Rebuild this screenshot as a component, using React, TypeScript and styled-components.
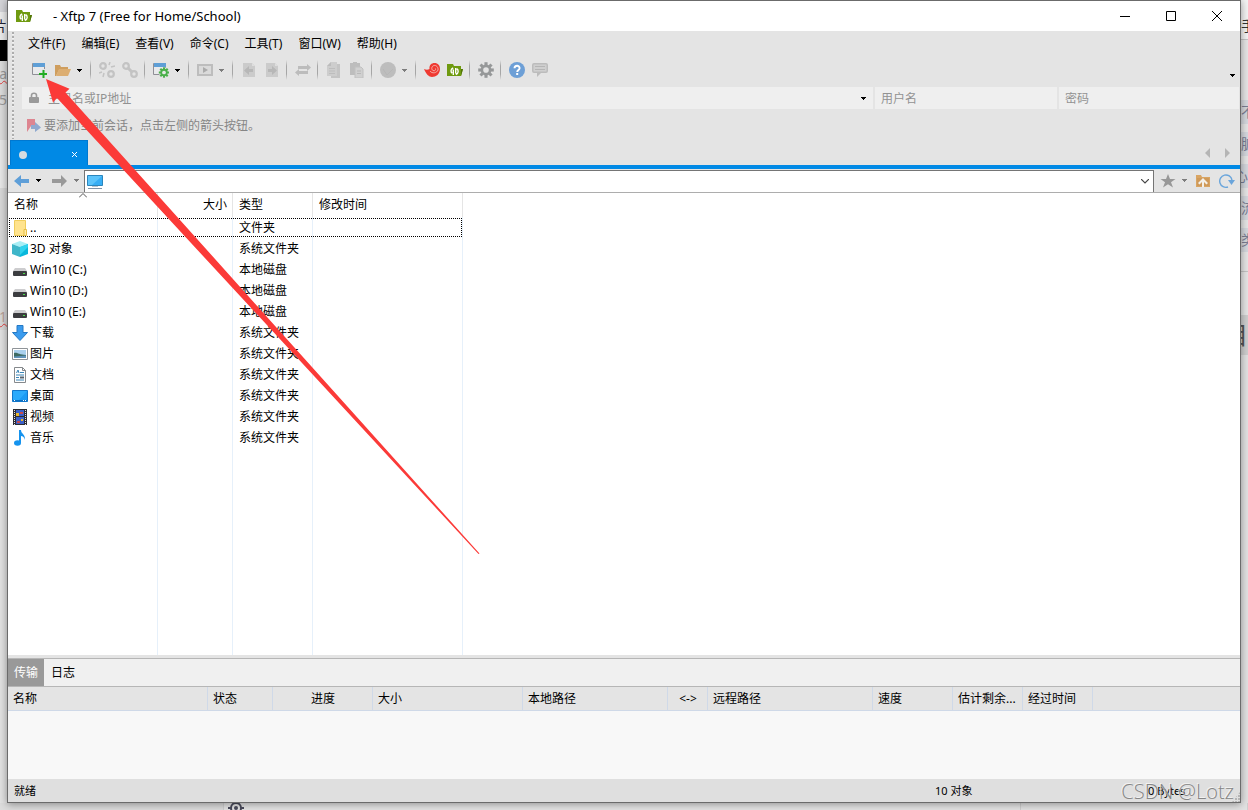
import React from "react";
import styled, { createGlobalStyle, css } from "styled-components";

const Global = createGlobalStyle`
  * { box-sizing: border-box; }
  body { margin: 0; background: #e2e2e2; }
  body, button, input, table {
    font-family: "Noto Sans", "Noto Sans CJK SC", sans-serif;
    font-size: 12px;
    line-height: 20px;
    color: #000;
  }
  button { border: 0; padding: 0; margin: 0; background: none; }
  svg { display: block; flex: none; }
`;

const CHROME = "#e4e4e4";
const BLUE = "#0089e5";

/* ---------- desktop behind the window ---------- */

const Desktop = styled.div`
  position: relative;
  display: grid;
  grid-template-columns: 7px minmax(0, 1fr) 7px;
  grid-template-rows: minmax(0, 1fr) 7px;
  min-height: 100vh;
  overflow: hidden;
`;

const Strip = styled.div`
  display: flex;
  flex-direction: column;
  overflow: hidden;
`;

const Patch = styled.div<{ $h: number; $bg: string; $color?: string; $size?: number; $end?: boolean; $line?: boolean }>`
  display: flex;
  flex: none;
  align-items: center;
  justify-content: ${(p) => (p.$end ? "flex-end" : "flex-start")};
  height: ${(p) => p.$h}px;
  background: ${(p) => p.$bg};
  color: ${(p) => p.$color || "#666"};
  font-size: ${(p) => p.$size || 14}px;
  white-space: nowrap;
  ${(p) => p.$line && css`border-bottom: 1px solid #c4c4c4;`}
`;

const Squiggle = styled.span`
  text-decoration: underline wavy #e04040 1px;
`;

const Below = styled.div`
  display: flex;
  grid-column: 1 / -1;
  background: #e0e0e0;
  overflow: hidden;
`;

const BelowPart = styled.div<{ $w?: number; $bg: string }>`
  flex: ${(p) => (p.$w ? `0 0 ${p.$w}px` : "1")};
  background: ${(p) => p.$bg};
  border-right: 1px solid #cfcfcf;
  padding-left: 4px;
`;

/* ---------- window ---------- */

const Window = styled.main`
  position: relative;
  display: flex;
  flex-direction: column;
  border: 1px solid #6b6b6b;
  background: ${CHROME};
  box-shadow: 0 1px 8px rgba(0, 0, 0, 0.4);
`;

const TitleBar = styled.header`
  display: flex;
  align-items: center;
  height: 30px;
  padding-left: 8px;
  background: #fff;
`;

const Title = styled.h1`
  flex: 1;
  margin: 0 0 0 21px;
  font-size: 13px;
  font-weight: 400;
`;

const CaptionButton = styled.button`
  display: grid;
  place-items: center;
  width: 46px;
  height: 30px;
`;

const Bars = styled.div`
  display: flex;
`;

const Grip = styled.div`
  width: 2px;
  margin: 1px 8px 1px 4px;
  background: repeating-linear-gradient(#adadad 0 2px, #f2f2f2 2px 3px, transparent 3px 4px);
`;

const BarStack = styled.div`
  flex: 1;
  min-width: 0;
`;

const MenuBar = styled.nav`
  display: flex;
  gap: 16px;
  height: 26px;
  padding-left: 6px;
  align-items: center;
`;

const ToolBar = styled.div`
  display: flex;
  align-items: center;
  height: 30px;
  padding: 0 5px 4px 6px;
`;

const Tool = styled.button`
  display: grid;
  place-items: center;
  width: 23px;
  height: 26px;
`;

const Drop = styled.button`
  display: flex;
  align-items: center;
  width: 13px;
  height: 26px;
  padding-left: 3px;
`;

const Separator = styled.span`
  width: 8px;
  height: 20px;
  background: linear-gradient(transparent, #a6a6a6 30% 70%, transparent) 3px 0 / 1px 100% no-repeat;
`;

const Spacer = styled.span`
  flex: 1;
`;

const OverflowDrop = styled.button`
  align-self: flex-end;
  padding-bottom: 6px;
`;

const HostBar = styled.form`
  display: flex;
  gap: 2px;
  height: 22px;
  margin-right: 1px;
`;

const Field = styled.label<{ $w?: number }>`
  display: flex;
  align-items: center;
  flex: ${(p) => (p.$w ? `0 1 ${p.$w}px` : "1")};
  min-width: 0;
  padding-left: 6px;
  background: #efefef;
`;

const FieldInput = styled.input<{ $gap?: boolean }>`
  flex: 1;
  min-width: 0;
  height: 22px;
  padding: 0;
  margin-left: ${(p) => (p.$gap ? 8 : 0)}px;
  border: 0;
  outline: 0;
  background: none;
  &::placeholder { color: #929292; opacity: 1; }
`;

const FieldDrop = styled.button`
  width: 12px;
  height: 22px;
`;

const SessionBar = styled.div`
  display: flex;
  align-items: center;
  gap: 3px;
  height: 31px;
  padding: 2px 0 0 5px;
  color: #868686;
`;

const TabStrip = styled.div`
  display: flex;
  height: 29px;
  padding-left: 2px;
  border-bottom: 4px solid ${BLUE};
`;

const SessionTab = styled.div`
  display: flex;
  align-items: center;
  justify-content: space-between;
  width: 78px;
  padding: 3px 10px 0 8px;
  border: solid #0078d0;
  border-width: 1px 1px 0;
  background: ${BLUE};
`;

const Dot = styled.span`
  width: 8px;
  height: 8px;
  border-radius: 50%;
  background: #d5dbe0;
`;

const TabArrows = styled.div`
  display: flex;
  align-items: center;
  gap: 15px;
  margin-left: auto;
  padding-right: 10px;
`;

const AddressBar = styled.div`
  display: flex;
  align-items: center;
  height: 24px;
  border-bottom: 1px solid #adadad;
`;

const AddressTools = styled.div<{ $left?: boolean }>`
  display: flex;
  align-items: center;
  padding-left: 6px;
  width: ${(p) => (p.$left ? 76 : 86)}px;
  gap: ${(p) => (p.$left ? 11 : 8)}px;
`;

const ToolPair = styled.div`
  display: flex;
  align-items: center;
  gap: 6px;
`;

const AddressBox = styled.label`
  display: flex;
  flex: 1;
  min-width: 0;
  height: 22px;
  margin-top: 1px;
  padding: 0 4px 0 2px;
  align-items: center;
  border: solid #757575;
  border-width: 1px 1px 0;
  background: #fff;
`;

/* ---------- file list ---------- */

const FilePane = styled.section`
  display: grid;
  flex: 1;
  min-height: 460px;
  justify-content: start;
  background: #fff;
`;

const FileTable = styled.table`
  table-layout: fixed;
  width: 455px;
  height: 100%;
  border-spacing: 0;
  th, td { padding: 0 5px 0 6px; border-right: 1px solid #e6f0fa; text-align: left; white-space: nowrap; }
  th { position: relative; height: 24px; font-weight: 400; border-color: #e5e5e5; }
  td:first-child { padding-left: 4px; }
`;

const FileRow = styled.tr<{ $focused?: boolean }>`
  height: 21px;
  ${(p) => p.$focused && css`outline: 1px dotted #000; outline-offset: -2px;`}
`;

const RightHead = styled.th`
  && { text-align: right; }
`;

const NameCell = styled.div`
  display: flex;
  align-items: center;
  gap: 2px;
`;

const SortMark = styled.span`
  position: absolute;
  top: 0;
  left: 50%;
  margin-left: -4px;
`;

/* ---------- transfer pane ---------- */

const PaneTabs = styled.div`
  display: flex;
  height: 29px;
  margin-top: 3px;
  border: solid #b6b6b6;
  border-width: 1px 0;
  background: #f0f0f0;
`;

const PaneTab = styled.button<{ $active?: boolean }>`
  width: 36px;
  height: 27px;
  ${(p) => p.$active && css`background: #999; color: #fff; margin-right: 1px;`}
`;

const TransferPane = styled.section`
  height: 92px;
  background: #f8f8f8;
  overflow: hidden;
`;

const TransferTable = styled.table`
  table-layout: fixed;
  width: 100%;
  border-spacing: 0;
  background: ${CHROME};
`;

const TransferHead = styled.th<{ $center?: boolean; $last?: boolean }>`
  height: 24px;
  padding: 0 4px 0 5px;
  border: solid #cfd9e8;
  border-width: 0 ${(p) => (p.$last ? 0 : 1)}px 1px 0;
  font-weight: 400;
  text-align: ${(p) => (p.$center ? "center" : "left")};
  white-space: nowrap;
`;

const StatusBar = styled.footer`
  display: flex;
  align-items: center;
  height: 23px;
  padding-left: 6px;
  background: #dfdfdf;
  font-size: 11px;
`;

const StatusItem = styled.span<{ $w?: number }>`
  flex: ${(p) => (p.$w ? `0 0 ${p.$w}px` : "1")};
`;

const SizeGrip = styled.span`
  align-self: flex-end;
  width: 8px;
  height: 10px;
  background: radial-gradient(circle at 1px 1px, #b5b5b5 1px, transparent 1px) 0 0 / 3px 3px;
  clip-path: polygon(100% 0, 100% 100%, 0 100%);
`;

const Watermark = styled.div`
  position: absolute;
  right: 14px;
  bottom: 4px;
  font-family: "Open Sans", sans-serif;
  font-size: 20px;
  font-weight: 300;
  line-height: 28px;
  color: #858585;
  text-shadow: -1px -1px 0 #f2f2f2;
  pointer-events: none;
`;

const Arrow = styled.svg`
  position: absolute;
  top: 0;
  left: 0;
  pointer-events: none;
`;

/* ---------- icons ---------- */

const Svg = ({ w = 16, h = 16, children }: { w?: number; h?: number; children: React.ReactNode }) => (
  <svg width={w} height={h} viewBox={`0 0 ${w} ${h}`} aria-hidden="true">{children}</svg>
);

const Caret = ({ color = "#000" }: { color?: string }) => (
  <Svg w={5} h={3}><path d="M0 0h5v1H4v1H3v1H2V2H1V1H0z" fill={color} /></Svg>
);

const XftpIcon = () => (
  <Svg>
    <path d="M0 2h6l1 2h7v3h2l-2 7H0z" fill="#6f9a10" />
    <path d="M14 7h2l-2 7z" fill="#527608" />
    <path d="M6.200 6C3.500 7 3.500 10 5.200 11.300M6.300 13V7.500M8.700 11.500V6M8.800 12.500c3-1 3-4.500.9-5.900" fill="none" stroke="#fff" strokeWidth="1.400" />
  </Svg>
);

const WindowGlyph = () => (
  <>
    <path d="M.5 1.500h12v11H.500z" fill="#e9eaec" stroke="#8f8f96" />
    <path d="M1 1h12v4H1z" fill="#5f9fd6" />
  </>
);

const NewIcon = () => (
  <Svg>
    <WindowGlyph />
    <path d="M10 7h3v3h3v3h-3v3h-3v-3H7v-3h3z" fill="#e4e4e4" />
    <path d="M10.500 8h2v3H15v2h-2.500v3h-2v-3H7v-2h3.500z" fill="#22ac22" />
  </Svg>
);

const GearShape = ({ x, y, r, fill, hole }: { x: number; y: number; r: number; fill: string; hole: string }) => (
  <g transform={`translate(${x} ${y})`}>
    {[0, 45, 90, 135].map((a) => (
      <rect key={a} x={-r * 0.2} y={-r} width={r * 0.4} height={r * 2} fill={fill} transform={`rotate(${a})`} />
    ))}
    <circle r={r * 0.7} fill={fill} />
    <circle r={r * 0.36} fill={hole} />
  </g>
);

const NewGearIcon = () => (
  <Svg><WindowGlyph /><circle cx="11" cy="10.500" r="5" fill="#e4e4e4" /><GearShape x={11} y={10.5} r={5.2} fill="#4ab04a" hole="#e8e8e8" /></Svg>
);

const OpenIcon = () => (
  <Svg>
    <path d="M0 3h5l1 2h7v3H4l-3 6H0z" fill="#cf9e5e" />
    <path d="M4 7h12l-3 7H1z" fill="#dcae72" />
  </Svg>
);

const LinkIcon = ({ broken }: { broken?: boolean }) => (
  <Svg>
    <g fill="none" stroke="#c3c3c3" strokeWidth="2.200">
      <circle cx="4" cy="4" r="2.800" />
      <circle cx="12" cy="12" r="2.800" />
      {broken ? <path d="M10 3l1-3M12 5l4-1M5 11l-1 4M3 10l-3 1" strokeWidth="1.500" /> : <path d="M6 6l4 4" strokeWidth="3" />}
    </g>
  </Svg>
);

const PlayIcon = () => (
  <Svg><path d="M1 3h14v10H1z" fill="#dadada" stroke="#bdbdbd" strokeWidth="2" /><path d="M6 5l5 3-5 3z" fill="#ababab" /></Svg>
);

const DocArrowIcon = ({ flip }: { flip?: boolean }) => (
  <Svg>
    <path d="M2 1h9l3 3v11H2z" fill="#cbcbcb" />
    <path d="M11 1v3h3z" fill="#dedede" />
    <path d={flip ? "M4 7h4V4l5 4.500L8 13v-3H4z" : "M12 7H8V4L3 8.500 8 13v-3h4z"} fill="#b7b7b7" />
  </Svg>
);

const SwapIcon = () => (
  <Svg><path d="M3 4h9V2l4 3.500L12 9V7H3zM13 9H4V7L0 10.500 4 14v-2h9z" fill="#bcbcbc" /></Svg>
);

const CopyIcon = () => (
  <Svg>
    <path d="M5 2h9v14H5z" fill="#c4c4c4" />
    <path d="M1 4l4-4h6v14H1z" fill="#cdcdcd" />
    <path d="M1 4l4-4v4z" fill="#bcbcbc" />
    <path d="M3 6.500h6M3 9h6M3 11.500h6" stroke="#bdbdbd" />
  </Svg>
);

const PasteIcon = () => (
  <Svg>
    <path d="M1 1h3V0h4v1h3v12H1z" fill="#bdbdbd" />
    <path d="M6 5h6l2 2v9H6z" fill="#d0d0d0" stroke="#c0c0c0" />
    <path d="M8 9h4M8 11.500h4" stroke="#b8b8b8" />
  </Svg>
);

const BallIcon = () => (
  <Svg><circle cx="8" cy="8" r="8" fill="#bdbdbd" /><path d="M3 7l4 6 6-6" fill="none" stroke="#b7b7b7" /></Svg>
);

const ShellIcon = () => (
  <Svg>
    <path d="M0 7c2 1 4 1 5.500 0C5 3 7.500 1 10.500 1 14 1 16 3.500 16 7c0 5-4 8-8 8-3 0-6-3-8-8z" fill="#ef3a32" />
    <path d="M6 9c2 3 7 2 8-1 .5-3-2-5-4-4.500C7.500 4 7 7.500 9 8.500s3-1 2.500-2" fill="none" stroke="#f6b5b0" strokeWidth=".9" />
  </Svg>
);

const GearIcon = () => (
  <Svg><GearShape x={8} y={8} r={7.8} fill="#969899" hole="#e4e4e4" /></Svg>
);

const HelpIcon = () => (
  <Svg>
    <circle cx="8" cy="8" r="8" fill="#6d9fd6" />
    <path d="M5.500 6.300C5.500 3 10.800 3 10.600 6.200 10.500 8 8.200 8 8.200 10" fill="none" stroke="#fff" strokeWidth="1.900" />
    <path d="M7.200 11h2v2h-2z" fill="#fff" />
  </Svg>
);

const ChatIcon = () => (
  <Svg>
    <path d="M2 1h12q2 0 2 2v6q0 2-2 2H9l-4 4v-4H2q-2 0-2-2V3q0-2 2-2z" fill="#bcbcbc" />
    <path d="M2 2.500h12q.5 0 .5 1v5q0 1-.5 1H2q-.5 0-.5-1v-5q0-1 .5-1z" fill="#cfcfcf" />
    <path d="M3 4.500h10M3 7.500h10" stroke="#b5b5b5" />
  </Svg>
);

const LockIcon = () => (
  <Svg w={12} h={12}>
    <path d="M3.500 6V3.500C3.500 .5 8.500 .5 8.500 3.500V6" fill="none" stroke="#9a9a9a" strokeWidth="1.600" />
    <rect x="1" y="5" width="10" height="6" rx="1" fill="#9a9a9a" />
  </Svg>
);

const FlagIcon = () => (
  <Svg w={14} h={14}>
    <path d="M0 0h8v8l-4-1-4 6z" fill="#dd8590" />
    <path d="M4 6h4V3l6 5.500L8 13v-3H4z" fill="#8fa9cf" />
  </Svg>
);

const CloseTab = () => (
  <Svg w={5} h={5}><path d="M0 0l5 5M5 0L0 5" stroke="#fff" /></Svg>
);

const Triangle = ({ right }: { right?: boolean }) => (
  <Svg w={5} h={10}><path d={right ? "M0 0l5 5-5 5z" : "M5 0L0 5l5 5z"} fill="#b5b5b5" /></Svg>
);

const NavArrow = ({ right, fill }: { right?: boolean; fill: string }) => (
  <Svg w={16} h={12}>
    <path d={right ? "M0 4h9V0l6 6-6 6V8H0z" : "M15 4H7V0L0 6l7 6V8h8z"} fill={fill} />
  </Svg>
);

const ComputerIcon = () => (
  <Svg>
    <path d="M.500 1.500h15v10H.500z" fill="#37aef5" stroke="#2b86bd" />
    <path d="M1 2h14L5 11H1z" fill="#5cc4fb" />
    <path d="M5 12h6v1H5z" fill="#b8c4ce" />
    <path d="M1 14h14v1H1z" fill="#7f93a8" />
  </Svg>
);

const StarIcon = () => (
  <Svg><path d="M8 1l2 5h5.500l-4.500 3.300 2 5.200-5-3.200-5 3.200 2-5.200L.5 6H6z" fill="#989898" /></Svg>
);

const UpFolderIcon = () => (
  <Svg>
    <path d="M1 2h5l1 2h8v10H1z" fill="#d9a563" />
    <path d="M2 5h12v8H2z" fill="#cf9a5a" />
    <path d="M8 5l5 5-1.500 1.500L9 9v5H7V9l-2.500 2.500L3 10z" fill="#f4f0e8" />
  </Svg>
);

const RefreshIcon = () => (
  <Svg>
    <path d="M9 14A6.200 6.200 0 1 1 13 7" fill="none" stroke="#6aa5db" strokeWidth="1.400" />
    <path d="M9 7h7l-3.500 5z" fill="#6aa5db" />
  </Svg>
);

const FolderIcon = () => (
  <Svg><path d="M2.500 0.500h11v15h-11z" fill="#ffe38d" stroke="#f0cd5c" /><path d="M12 9.500h2.500v6H12z" fill="#ffeaa6" stroke="#e6be45" /></Svg>
);

const CubeIcon = () => (
  <Svg>
    <path d="M8 0l8 3-8 3-8-3z" fill="#a9eef5" />
    <path d="M0 3l8 3v10l-8-3z" fill="#3fb6c9" />
    <path d="M8 6l8-3v10l-8 3z" fill="#08b8dc" />
    <path d="M8 6l8-3v3l-8 8z" fill="#30d3ee" />
  </Svg>
);

const DriveIcon = () => (
  <Svg>
    <path d="M3 6h10l2 3H1z" fill="#cdcdcf" />
    <rect x="1" y="9" width="14" height="5" rx="1" fill="#3c3d40" />
    <path d="M11 11h2v1h-2z" fill="#4be04b" />
  </Svg>
);

const DownloadIcon = () => (
  <Svg><path d="M5 .5h6v7h4.500L8 15.500 .5 7.500H5z" fill="#3a9bee" stroke="#2579c4" /></Svg>
);

const PictureIcon = () => (
  <Svg>
    <path d="M.5 2.500h15v11H.500z" fill="#fff" stroke="#8f9498" />
    <path d="M2 4h12v8H2z" fill="#a9d0ee" />
    <path d="M2 7c3-1 5 2 12 2v3H2z" fill="#3d6b63" />
    <path d="M2 10.500l12-1V12H2z" fill="#5f93bb" />
  </Svg>
);

const DocumentIcon = () => (
  <Svg>
    <path d="M2.500.5h8l3 3v12h-11z" fill="#fff" stroke="#85898c" />
    <path d="M10.500.5v3h3" fill="none" stroke="#85898c" />
    <path d="M4.500 6L6 3l1 3M8 5.500h4M4 8h8M4 13h8" fill="none" stroke="#3b86b8" />
    <path d="M4 10.500h3" stroke="#3b86b8" />
    <path d="M8 9.500h4v2H8z" fill="#55616c" />
  </Svg>
);

const DesktopIcon = () => (
  <Svg>
    <path d="M.5 2.500h15v11H.500z" fill="#1b9bf5" stroke="#1177cc" />
    <path d="M1 3h14L7 12H1z" fill="#2aaafc" />
    <path d="M1 12h14v1H1z" fill="#0c6fc0" />
    <path d="M2 12h1v1H2zM11 12h1v1h-1zM13 12h1v1h-1z" fill="#fff" />
  </Svg>
);

const VideoIcon = () => (
  <Svg>
    <path d="M1 0h14v16H1z" fill="#2d2d33" />
    <path d="M2.500 1v15M13.500 1v15" stroke="#e4e4e4" strokeDasharray="1 1" />
    <path d="M4 1h8v6H4zM4 8h8v7H4z" fill="#3a60c8" />
    <path d="M4 4h3v3H4zM9 10h2v2H9z" fill="#e9b72b" />
    <path d="M8 3h3v2H8zM5 12h3v2H5z" fill="#c94a4a" />
  </Svg>
);

const MusicIcon = () => (
  <Svg>
    <ellipse cx="5.500" cy="13" rx="3.500" ry="2.800" fill="#1593ee" />
    <path d="M7 0h2c0 4 4.500 4 4 10-1-3-2-4-4-4v7H7z" fill="#1593ee" />
  </Svg>
);

/* ---------- data ---------- */

const menus = ["文件(F)", "编辑(E)", "查看(V)", "命令(C)", "工具(T)", "窗口(W)", "帮助(H)"];

type ToolItem = { label: string; icon: React.ReactNode; drop?: string };

const toolGroups: ToolItem[][] = [
  [{ label: "新建", icon: <NewIcon /> }, { label: "打开", icon: <OpenIcon />, drop: "#000" }],
  [{ label: "断开", icon: <LinkIcon broken /> }, { label: "重新连接", icon: <LinkIcon /> }],
  [{ label: "属性", icon: <NewGearIcon />, drop: "#000" }],
  [{ label: "运行", icon: <PlayIcon />, drop: "#7d7d7d" }],
  [{ label: "下载", icon: <DocArrowIcon /> }, { label: "上传", icon: <DocArrowIcon flip /> }],
  [{ label: "同步", icon: <SwapIcon /> }],
  [{ label: "复制", icon: <CopyIcon /> }, { label: "粘贴", icon: <PasteIcon /> }],
  [{ label: "编码", icon: <BallIcon />, drop: "#7d7d7d" }],
  [{ label: "Xshell", icon: <ShellIcon /> }, { label: "Xftp", icon: <XftpIcon /> }],
  [{ label: "选项", icon: <GearIcon /> }],
  [{ label: "帮助", icon: <HelpIcon /> }, { label: "反馈", icon: <ChatIcon /> }],
];

const files = [
  { name: "..", type: "文件夹", icon: <FolderIcon /> },
  { name: "3D 对象", type: "系统文件夹", icon: <CubeIcon /> },
  { name: "Win10 (C:)", type: "本地磁盘", icon: <DriveIcon /> },
  { name: "Win10 (D:)", type: "本地磁盘", icon: <DriveIcon /> },
  { name: "Win10 (E:)", type: "本地磁盘", icon: <DriveIcon /> },
  { name: "下载", type: "系统文件夹", icon: <DownloadIcon /> },
  { name: "图片", type: "系统文件夹", icon: <PictureIcon /> },
  { name: "文档", type: "系统文件夹", icon: <DocumentIcon /> },
  { name: "桌面", type: "系统文件夹", icon: <DesktopIcon /> },
  { name: "视频", type: "系统文件夹", icon: <VideoIcon /> },
  { name: "音乐", type: "系统文件夹", icon: <MusicIcon /> },
];

const transferColumns = [
  { label: "名称", w: 200 },
  { label: "状态", w: 65 },
  { label: "进度", w: 100, center: true },
  { label: "大小", w: 150 },
  { label: "本地路径", w: 145 },
  { label: "<->", w: 40, center: true },
  { label: "远程路径", w: 165 },
  { label: "速度", w: 80 },
  { label: "估计剩余...", w: 70 },
  { label: "经过时间", w: 70 },
];

export default function App() {
  return (
    <Desktop>
      <Global />
      <Strip>
        <Patch $h={12} $bg="#d4d4d8" />
        <Patch $h={28} $bg="#ececec" $color="#223" $end>片</Patch>
        <Patch $h={21} $bg="#000" />
        <Patch $h={26} $bg="#dcdcdc" $color="#999" $end><Squiggle>sa</Squiggle></Patch>
        <Patch $h={26} $bg="#dcdcdc" $color="#999" $end>5</Patch>
        <Patch $h={27} $bg="#dcdcdc" />
        <Patch $h={48} $bg="#e8e8e8" />
        <Patch $h={116} $bg="#d8d8d8" />
        <Patch $h={26} $bg="#d8d8d8" $color="#b9a29a" $end><Squiggle>1</Squiggle></Patch>
      </Strip>

      <Window>
        <TitleBar>
          <XftpIcon />
          <Title>- Xftp 7 (Free for Home/School)</Title>
          <CaptionButton aria-label="最小化"><Svg w={10} h={10}><path d="M0 5.500h10" stroke="#000" /></Svg></CaptionButton>
          <CaptionButton aria-label="最大化"><Svg w={10} h={10}><path d="M.5.5h9v9h-9z" fill="none" stroke="#000" /></Svg></CaptionButton>
          <CaptionButton aria-label="关闭"><Svg w={10} h={10}><path d="M0 0l10 10M10 0L0 10" stroke="#000" /></Svg></CaptionButton>
        </TitleBar>

        <Bars>
          <Grip />
          <BarStack>
            <MenuBar>{menus.map((m) => <button key={m}>{m}</button>)}</MenuBar>
            <ToolBar>
              {toolGroups.map((group, i) => (
                <React.Fragment key={i}>
                  {i > 0 && <Separator />}
                  {group.map((t) => (
                    <React.Fragment key={t.label}>
                      <Tool aria-label={t.label}>{t.icon}</Tool>
                      {t.drop && <Drop aria-label={`${t.label}选项`}><Caret color={t.drop} /></Drop>}
                    </React.Fragment>
                  ))}
                </React.Fragment>
              ))}
              <Spacer />
              <OverflowDrop aria-label="更多"><Caret /></OverflowDrop>
            </ToolBar>
            <HostBar>
              <Field>
                <LockIcon />
                <FieldInput $gap aria-label="主机名" placeholder="主机名或IP地址" />
                <FieldDrop type="button" aria-label="历史主机"><Caret /></FieldDrop>
              </Field>
              <Field $w={182}><FieldInput aria-label="用户名" placeholder="用户名" /></Field>
              <Field $w={180}><FieldInput aria-label="密码" type="password" placeholder="密码" /></Field>
            </HostBar>
          </BarStack>
        </Bars>

        <Bars>
          <Grip />
          <SessionBar><FlagIcon />要添加当前会话，点击左侧的箭头按钮。</SessionBar>
        </Bars>

        <TabStrip>
          <SessionTab>
            <Dot />
            <button aria-label="关闭标签"><CloseTab /></button>
          </SessionTab>
          <TabArrows>
            <button aria-label="上一个标签"><Triangle /></button>
            <button aria-label="下一个标签"><Triangle right /></button>
          </TabArrows>
        </TabStrip>

        <AddressBar>
          <AddressTools $left>
            <ToolPair>
              <button aria-label="后退"><NavArrow fill="#5f9fd8" /></button>
              <button aria-label="后退历史"><Caret /></button>
            </ToolPair>
            <ToolPair>
              <button aria-label="前进"><NavArrow right fill="#999" /></button>
              <button aria-label="前进历史"><Caret color="#7d7d7d" /></button>
            </ToolPair>
          </AddressTools>
          <AddressBox>
            <ComputerIcon />
            <FieldInput aria-label="路径" />
            <button aria-label="路径历史"><Svg w={8} h={5}><path d="M0 0l4 4 4-4" fill="none" stroke="#444" strokeWidth="1.200" /></Svg></button>
          </AddressBox>
          <AddressTools>
            <ToolPair>
              <button aria-label="收藏"><StarIcon /></button>
              <button aria-label="收藏列表"><Caret color="#7d7d7d" /></button>
            </ToolPair>
            <button aria-label="上级目录"><UpFolderIcon /></button>
            <button aria-label="刷新"><RefreshIcon /></button>
          </AddressTools>
        </AddressBar>

        <FilePane>
          <FileTable>
            <colgroup><col width={150} /><col width={75} /><col width={80} /><col width={150} /></colgroup>
            <thead>
              <tr>
                <th>名称<SortMark><Svg w={8} h={5}><path d="M0 4.500l4-4 4 4" fill="none" stroke="#555" /></Svg></SortMark></th>
                <RightHead>大小</RightHead>
                <th>类型</th>
                <th>修改时间</th>
              </tr>
            </thead>
            <tbody>
              {files.map((f, i) => (
                <FileRow key={f.name} $focused={i === 0}>
                  <td><NameCell>{f.icon}{f.name}</NameCell></td>
                  <td />
                  <td>{f.type}</td>
                  <td />
                </FileRow>
              ))}
              <tr><td /><td /><td /><td /></tr>
            </tbody>
          </FileTable>
        </FilePane>

        <PaneTabs role="tablist">
          <PaneTab role="tab" aria-selected $active>传输</PaneTab>
          <PaneTab role="tab" aria-selected={false}>日志</PaneTab>
        </PaneTabs>
        <TransferPane>
          <TransferTable>
            <colgroup>{transferColumns.map((c) => <col key={c.label} width={c.w} />)}<col /></colgroup>
            <thead>
              <tr>
                {transferColumns.map((c) => <TransferHead key={c.label} $center={c.center}>{c.label}</TransferHead>)}
                <TransferHead $last aria-hidden="true" />
              </tr>
            </thead>
          </TransferTable>
        </TransferPane>

        <StatusBar>
          <StatusItem>就绪</StatusItem>
          <StatusItem $w={213}>10 对象</StatusItem>
          <StatusItem $w={84}>0 Bytes</StatusItem>
          <SizeGrip />
        </StatusBar>
      </Window>

      <Strip>
        <Patch $h={12} $bg="#f4f4f4" />
        <Patch $h={28} $bg="#f4f4f4" $color="#333" $line>手</Patch>
        <Patch $h={60} $bg="#e6e6e6" />
        <Patch $h={24} $bg="#d5d8de" $color="#7a7e95">不</Patch>
        <Patch $h={8} $bg="#e6e6e6" />
        <Patch $h={24} $bg="#d5d8de" $color="#7a7e95">脏</Patch>
        <Patch $h={8} $bg="#e6e6e6" />
        <Patch $h={24} $bg="#d5d8de" $color="#7a7e95" $end>心</Patch>
        <Patch $h={8} $bg="#e6e6e6" />
        <Patch $h={24} $bg="#d5d8de" $color="#7a7e95">流</Patch>
        <Patch $h={8} $bg="#e6e6e6" />
        <Patch $h={24} $bg="#d5d8de" $color="#7a7e95">类</Patch>
        <Patch $h={20} $bg="#e6e6e6" $line />
        <Patch $h={43} $bg="#e6e6e6" />
        <Patch $h={40} $bg="#cfcfcf" $color="#555" $size={24} $end>目</Patch>
      </Strip>

      <Below>
        <BelowPart $w={224} $bg="#dcdcdc" />
        <BelowPart $w={797} $bg="#e4e4e4">
          <Svg><circle cx="8" cy="5" r="5" fill="none" stroke="#4a4b5c" strokeWidth="2" /><circle cx="8" cy="5" r="2" fill="#4a4b5c" /><path d="M0 5h3M13 5h3" stroke="#4a4b5c" strokeWidth="2" /></Svg>
        </BelowPart>
        <BelowPart $bg="#e2e2e2" />
      </Below>

      <Watermark>CSDN @Lotz</Watermark>
      <Arrow width="490" height="560" viewBox="0 0 490 560" aria-hidden="true">
        <path d="M46 79L69.500 88.700 65.500 92.500 479.500 553.500 478.500 554 57 98 53 102.500z" fill="#fb3a38" />
      </Arrow>
    </Desktop>
  );
}
